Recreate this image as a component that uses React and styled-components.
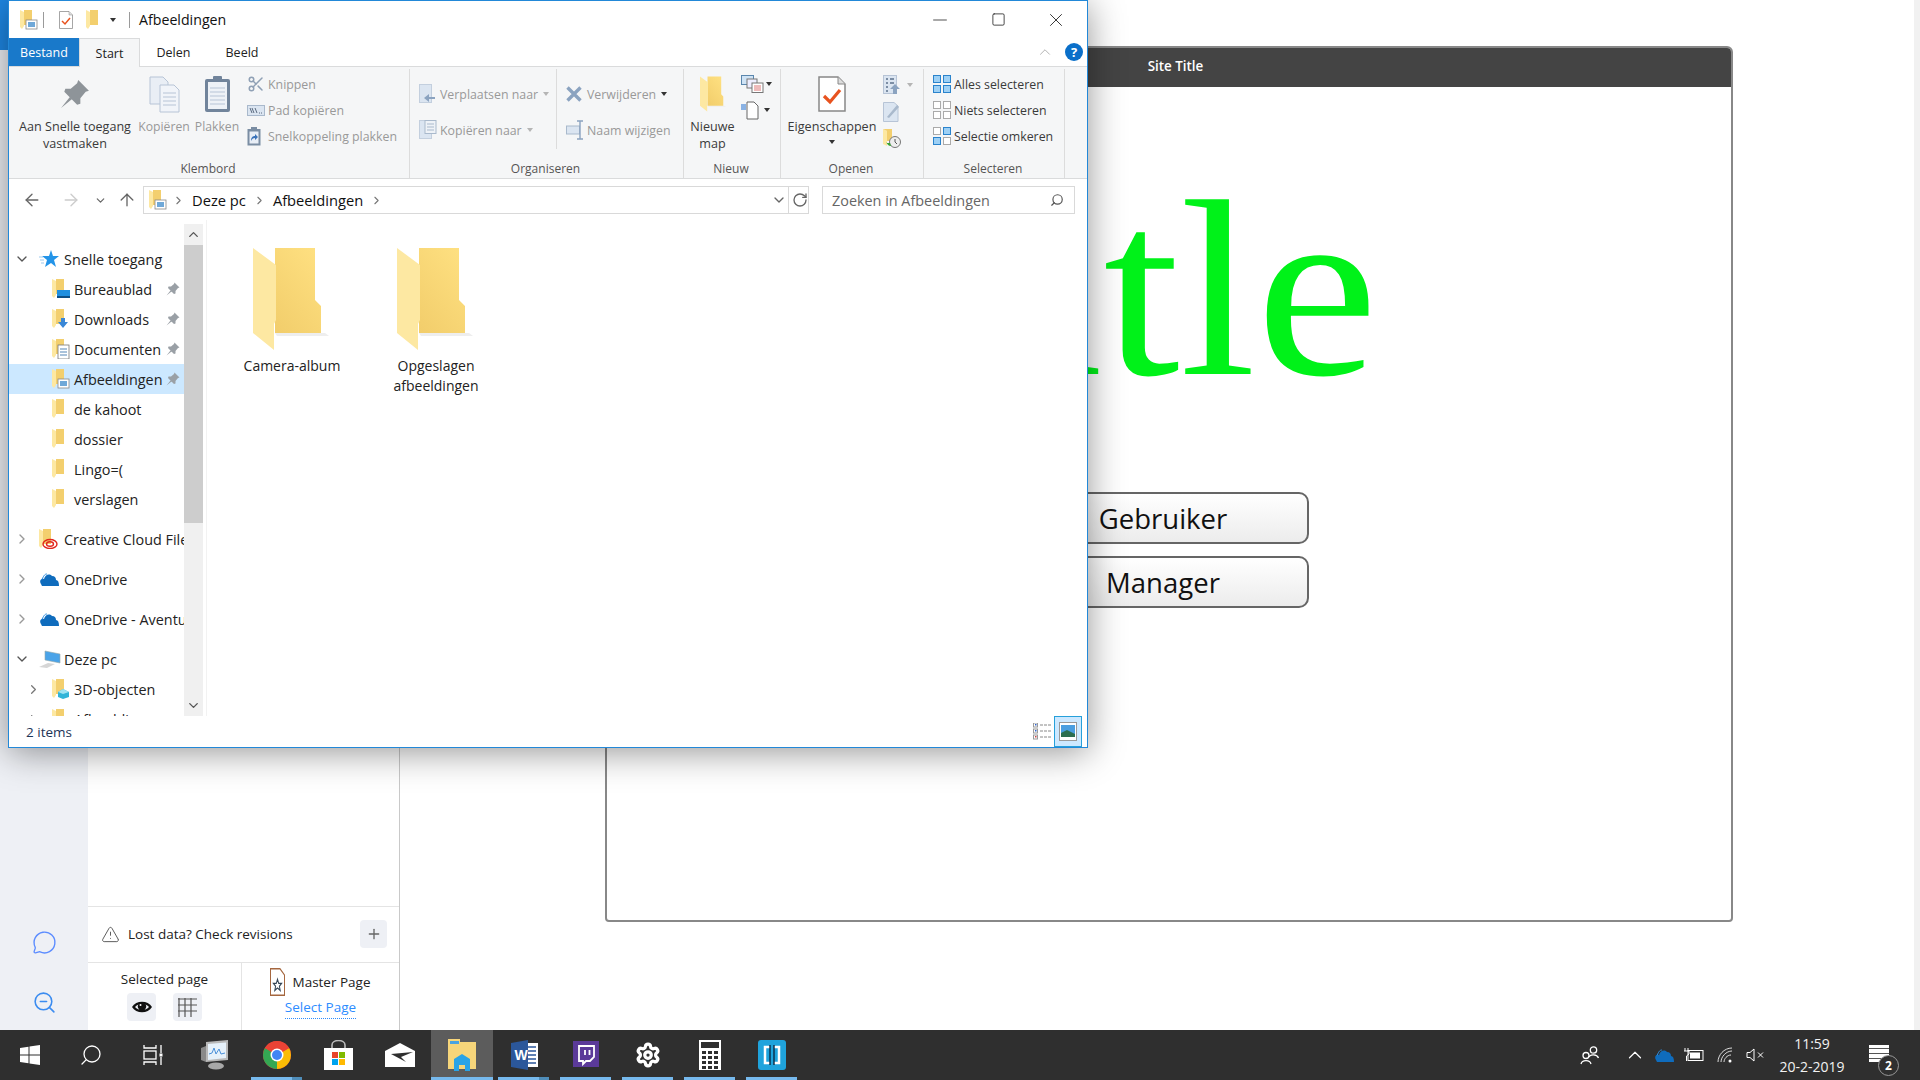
import React from "react"
import styled, { createGlobalStyle } from "styled-components"
import {
  ChevronDown, ChevronRight, ChevronUp, ArrowLeft, ArrowRight, ArrowUp, RotateCw,
  Search, Scissors, Settings, Minus, Square, X, Plus, MessageCircle, ZoomOut, TriangleAlert,
} from "lucide-react"

const GlobalStyle = createGlobalStyle`
  html, body { margin: 0; padding: 0; background: #fff; overflow: hidden; }
  * { box-sizing: border-box; }
  body { font-family: "Open Sans", "Noto Sans", sans-serif; }
`

const Desktop = styled.div`
  position: relative;
  width: 1920px;
  height: 1080px;
  display: flex;
  flex-direction: column;
  overflow: hidden;
`
const Workspace = styled.div`
  flex: 1;
  display: flex;
  min-height: 0;
`
const Rail = styled.div`
  width: 88px;
  background: #eef0f5;
  display: flex;
  flex-direction: column;
  align-items: center;
`
const RailLogo = styled.div`
  width: 100%;
  height: 50px;
  flex: none;
  background: #1e88e5;
  margin-bottom: 880px;
`
const RailIcon = styled.div`
  height: 60px;
  flex: none;
  display: flex;
  justify-content: center;
  color: #5b8cff;
  &:last-child { height: 40px; }
`
const SidePanel = styled.div`
  width: 312px;
  border-right: 1px solid #c9c9c9;
  display: flex;
  flex-direction: column;
  justify-content: flex-end;
  background: #fff;
`
const LostRow = styled.div`
  height: 57px;
  border-top: 1px solid #e4e4e4;
  border-bottom: 1px solid #e4e4e4;
  display: flex;
  align-items: center;
  padding: 0 12px 1px 13px;
  font-size: 13.5px;
  color: #222;
  span { margin-left: 8px; flex: 1; }
`
const AddButton = styled.div`
  width: 27px;
  height: 28px;
  border-radius: 4px;
  background: #eef0f5;
  display: flex;
  align-items: center;
  justify-content: center;
  color: #666;
`
const PageRow = styled.div`
  height: 67px;
  display: flex;
`
const PageCell = styled.div`
  width: ${({ $w }) => $w}px;
  display: flex;
  flex-direction: column;
  align-items: center;
  font-size: 13.5px;
  color: #222;
  border-right: ${({ $divide }) => ($divide ? "1px solid #e4e4e4" : "none")};
  padding-top: ${({ $top }) => $top}px;
`
const CellTools = styled.div`
  display: flex;
  gap: 17px;
  margin-top: 5px;
`
const CellTool = styled.div`
  width: 29px;
  height: 28px;
  border-radius: 4px;
  background: #eef0f5;
  display: flex;
  align-items: center;
  justify-content: center;
  color: #333;
`
const MasterLabel = styled.div`
  display: flex;
  align-items: center;
  gap: 7px;
  height: 29px;
`
const SelectLink = styled.a`
  color: #2d8cff;
  margin-top: 1px;
  padding-bottom: 1px;
  border-bottom: 1px dotted #2d8cff;
  line-height: 20px;
`
const Canvas = styled.div`
  flex: 1;
  display: flex;
  padding: 46px 0 0 205px;
  background: #fff;
  border-right: 6px solid #f1f1f1;
`
const PageFrame = styled.div`
  width: 1128px;
  height: 876px;
  border: 2px solid #888;
  border-radius: 6px 6px 4px 4px;
  overflow: hidden;
  display: flex;
  flex-direction: column;
`
const SiteHeader = styled.div`
  height: 39px;
  background: #444;
  color: #fff;
  font-size: 13.4px;
  font-weight: 600;
  display: flex;
  align-items: center;
  justify-content: center;
  padding: 0 0 4px 13px;
  flex: none;
`
const BigTitle = styled.h1`
  margin: 77px 353px 0 auto;
  width: fit-content;
  font-family: "Liberation Serif", serif;
  font-weight: 400;
  font-size: 252px;
  line-height: 250px;
  color: #00f219;
  transform: scaleX(1.09);
  transform-origin: right center;
`
const ActionList = styled.div`
  margin-top: 78px;
  display: flex;
  flex-direction: column;
  align-items: center;
  gap: 12px;
  padding-right: 12px;
`
const ActionButton = styled.button`
  width: 291px;
  height: 52px;
  border: 2px solid #666;
  border-radius: 10px;
  background: linear-gradient(#fff, #ececec);
  font-family: "Open Sans", sans-serif;
  font-size: 27.5px;
  color: #111;
`

/* explorer window */
const ExplorerWindow = styled.div`
  position: absolute;
  left: 8px;
  top: 0;
  width: 1080px;
  height: 748px;
  border: 1px solid #2288d8;
  background: #fff;
  box-shadow: 0 4px 34px rgba(0, 0, 0, 0.42);
  display: flex;
  flex-direction: column;
  font-size: 12.5px;
  color: #222;
  z-index: 2;
`
const TitleBar = styled.div`
  height: 37px;
  flex: none;
  display: flex;
  align-items: center;
  padding: 0 2px 0 11px;
`
const QuickSep = styled.div`
  width: 1px;
  height: 16px;
  background: #9a9a9a;
  margin: ${({ $m }) => $m};
`
const WindowTitle = styled.div`
  font-size: 14.2px;
  color: #111;
  flex: 1;
`
const WindowControl = styled.div`
  width: 58px;
  display: flex;
  justify-content: center;
  color: #111;
`
const Caret = styled.i`
  display: inline-block;
  width: 0;
  height: 0;
  border-left: 3.5px solid transparent;
  border-right: 3.5px solid transparent;
  border-top: 4px solid ${({ $light }) => ($light ? "#b5b5b5" : "#333")};
  margin-left: ${({ $ml }) => $ml || 0}px;
  margin-top: ${({ $mt }) => $mt || 0}px;
`
const TabRow = styled.div`
  height: 28px;
  flex: none;
  display: flex;
  align-items: stretch;
  position: relative;
  z-index: 1;
  font-size: 12.5px;
`
const FileTab = styled.div`
  width: 70px;
  background: #1979ca;
  color: #fff;
  display: flex;
  align-items: center;
  justify-content: center;
`
const Tab = styled.div`
  width: ${({ $w }) => $w}px;
  display: flex;
  align-items: center;
  justify-content: center;
  margin-bottom: ${({ $active }) => ($active ? "-1px" : "0")};
  background: ${({ $active }) => ($active ? "#f5f6f7" : "transparent")};
  border: 1px solid ${({ $active }) => ($active ? "#dadbdc" : "transparent")};
  border-bottom: none;
`
const RibbonTools = styled.div`
  margin-left: auto;
  display: flex;
  align-items: center;
  gap: 11px;
  padding-right: 4px;
`
const HelpDot = styled.div`
  width: 18px;
  height: 18px;
  border-radius: 50%;
  background: #0a6fc9;
  color: #fff;
  font-size: 13px;
  font-weight: 700;
  display: flex;
  align-items: center;
  justify-content: center;
`
const Ribbon = styled.div`
  height: 113px;
  flex: none;
  background: #f5f6f7;
  border-top: 1px solid #dadbdc;
  border-bottom: 1px solid #dadbdc;
  display: flex;
  padding-top: 2px;
`
const Group = styled.div`
  width: ${({ $w }) => $w}px;
  height: 109px;
  border-right: 1px solid #dcdcdc;
  display: flex;
  flex-direction: column;
`
const GroupBody = styled.div`
  flex: 1;
  display: flex;
  min-height: 0;
`
const GroupLabel = styled.div`
  height: 19px;
  line-height: 19px;
  text-align: center;
  font-size: 12px;
  color: #555;
  flex: none;
  padding-right: 2px;
`
const BigButton = styled.div`
  width: ${({ $w }) => $w}px;
  display: flex;
  flex-direction: column;
  align-items: center;
  padding-top: 5px;
  text-align: center;
  line-height: 17px;
  font-size: ${({ $off }) => ($off ? "12.2px" : "12.6px")};
  white-space: nowrap;
  color: ${({ $off }) => ($off ? "#999" : "#3a3a3a")};
`
const BigIcon = styled.div`
  height: 40px;
  margin-bottom: 4px;
  display: flex;
  align-items: center;
  justify-content: center;
`
const SmallColumn = styled.div`
  display: flex;
  flex-direction: column;
  width: ${({ $w }) => ($w ? `${$w}px` : "auto")};
  padding: ${({ $top }) => $top}px 0 0 ${({ $left }) => $left || 0}px;
  border-right: ${({ $divide }) => ($divide ? "1px solid #dcdcdc" : "none")};
  height: ${({ $divide }) => ($divide ? "80px" : "auto")};
`
const SmallRow = styled.div`
  height: ${({ $h }) => $h}px;
  display: flex;
  align-items: center;
  white-space: nowrap;
  font-size: 12.35px;
  color: ${({ $off }) => ($off ? "#999" : "#3a3a3a")};
`
const SmallSlot = styled.div`
  width: ${({ $w }) => $w}px;
  flex: none;
  display: flex;
  align-items: center;
`
const AddressRow = styled.div`
  height: 41px;
  flex: none;
  display: flex;
  align-items: center;
  padding-top: 1px;
`
const NavButton = styled.div`
  width: ${({ $w }) => $w}px;
  display: flex;
  justify-content: center;
  color: ${({ $off }) => ($off ? "#ccc" : "#666")};
`
const AddressBox = styled.div`
  margin-left: 4px;
  width: 666px;
  height: 28px;
  border: 1px solid #d9d9d9;
  display: flex;
  align-items: center;
  font-size: 14.7px;
  color: #111;
  padding-left: 5px;
`
const AddressIcon = styled.div`
  display: flex;
  margin-right: 3px;
`
const Crumb = styled.span`
  margin: 0 7px;
`
const AddressTail = styled.div`
  margin-left: auto;
  display: flex;
  align-items: stretch;
  height: 100%;
`
const TailCell = styled.div`
  width: 20px;
  display: flex;
  align-items: center;
  justify-content: center;
  color: #666;
  padding-left: 2px;
  border-left: ${({ $line }) => ($line ? "1px solid #d9d9d9" : "none")};
`
const SearchBox = styled.div`
  margin-left: 13px;
  width: 253px;
  height: 28px;
  border: 1px solid #d9d9d9;
  display: flex;
  align-items: center;
  justify-content: space-between;
  padding: 0 10px 0 9px;
  font-size: 14.4px;
  color: #666;
`
const MirroredIcon = styled.span`
  display: flex;
  transform: scaleX(-1);
`
const BodyRow = styled.div`
  height: 496px;
  flex: none;
  display: flex;
  overflow: hidden;
`
const NavPane = styled.div`
  width: 175px;
  flex: none;
  padding-top: 24px;
  overflow: hidden;
  font-size: 14.4px;
`
const NavRow = styled.div`
  height: 30px;
  margin-top: ${({ $gap }) => ($gap ? "10px" : "0")};
  display: flex;
  align-items: center;
  white-space: nowrap;
  overflow: hidden;
  color: #222;
  background: ${({ $sel }) => ($sel ? "#cce8ff" : "transparent")};
`
const NavChevron = styled.div`
  width: ${({ $w }) => $w}px;
  flex: none;
  display: flex;
  justify-content: flex-end;
  color: #777;
  padding-right: ${({ $pr }) => $pr}px;
`
const NavGlyph = styled.div`
  width: ${({ $w }) => $w}px;
  flex: none;
  display: flex;
  align-items: center;
  padding-left: ${({ $left }) => $left || 0}px;
`
const NavText = styled.span`
  flex: ${({ $grow }) => ($grow ? 1 : "none")};
`
const PinSlot = styled.div`
  width: 18px;
  flex: none;
  display: flex;
  justify-content: flex-start;
`
const ScrollBar = styled.div`
  width: 19px;
  flex: none;
  margin-top: 4px;
  background: #f0f0f0;
  display: flex;
  flex-direction: column;
  align-items: center;
  color: #555;
`
const ScrollEnd = styled.div`
  height: ${({ $h }) => $h}px;
  display: flex;
  align-items: center;
  justify-content: center;
  flex: none;
`
const ScrollThumb = styled.div`
  width: 100%;
  height: 278px;
  background: #cdcdcd;
  flex: none;
  margin-bottom: auto;
`
const FileArea = styled.div`
  flex: 1;
  margin-left: 3px;
  border-left: 1px solid #f2f2f2;
  padding: 28px 0 0 13px;
  display: flex;
  align-items: flex-start;
`
const FileTile = styled.div`
  width: 144px;
  display: flex;
  flex-direction: column;
  align-items: center;
  text-align: center;
  font-size: 14px;
  line-height: 20px;
  color: #222;
  svg { margin: 0 2px 6px 0; }
`
const StatusBar = styled.div`
  height: 31px;
  flex: none;
  display: flex;
  align-items: center;
  padding-left: 17px;
  font-size: 13.5px;
  color: #1d3557;
`
const StatusViews = styled.div`
  margin-left: auto;
  display: flex;
  align-items: center;
  height: 100%;
  padding-right: 5px;
`
const ViewToggle = styled.div`
  width: ${({ $w }) => $w}px;
  height: 100%;
  display: flex;
  align-items: center;
  justify-content: center;
  background: ${({ $on }) => ($on ? "#cce8ff" : "transparent")};
  border: 1px solid ${({ $on }) => ($on ? "#26a0da" : "transparent")};
`

/* taskbar */
const Taskbar = styled.div`
  height: 50px;
  flex: none;
  background: #2f2f2f;
  display: flex;
  position: relative;
  z-index: 3;
`
const TaskSlot = styled.div`
  position: relative;
  width: 61.9px;
  height: 100%;
  flex: none;
  display: flex;
  align-items: center;
  justify-content: center;
  background: ${({ $active }) => ($active ? "#5c5c5c" : "transparent")};
  &:first-child { width: 60px; }
  &::after {
    content: "";
    display: ${({ $open }) => ($open ? "block" : "none")};
    position: absolute;
    left: ${({ $active }) => ($active ? "0" : "5px")};
    right: ${({ $active }) => ($active ? "0" : "6px")};
    bottom: 0;
    height: 3px;
    background: ${({ $stack }) =>
      $stack ? "linear-gradient(90deg, #76b9ed 80%, #4f8db9 80%)" : "#76b9ed"};
  }
`
const Tray = styled.div`
  margin-left: auto;
  display: flex;
  align-items: center;
  color: #fff;
`
const TrayIcon = styled.div`
  width: ${({ $w }) => $w}px;
  display: flex;
  justify-content: center;
`
const Clock = styled.div`
  width: 84px;
  margin: 0 14px 0 0;
  text-align: center;
  font-size: 14px;
  line-height: 23px;
  color: #f2f2f2;
`
const Notification = styled.div`
  position: relative;
  width: 52px;
  height: 50px;
`
const NotifyBubble = styled.div`
  position: absolute;
  left: 1px;
  top: 15px;
  width: 20px;
  height: 17px;
  background: repeating-linear-gradient(#fff 0 3px, #555 3px 4px, #fff 4px 5px);
`
const NotifyBadge = styled.div`
  position: absolute;
  left: 10px;
  top: 25px;
  width: 21px;
  height: 21px;
  border-radius: 50%;
  border: 1px solid #999;
  background: #2f2f2f;
  color: #fff;
  font-size: 12px;
  font-weight: 700;
  display: flex;
  align-items: center;
  justify-content: center;
`

/* drawings */
const BigFolder = ({ w = 76, h = 102 }) => (
  <svg width={w} height={h} viewBox="0 0 76 102">
    <defs>
      <linearGradient id="fold" x1="0" x2="1" y1="1" y2="0">
        <stop offset="0" stopColor="#efc966" />
        <stop offset="1" stopColor="#ffe182" />
      </linearGradient>
    </defs>
    <path d="M22 85H72L76 88H24Z" fill="#eee" />
    <path d="M0 0H62V52L68 58V85H22V0Z" fill="url(#fold)" />
    <path d="M0 0L23 17V72L21 76V102L0 85Z" fill="#fde8a2" />
  </svg>
)

const MiniFolder = () => (
  <g>
    <path d="M0 0H12V15H4V0Z" fill="#f3cf6e" />
    <path d="M0 0L4 2V16L2 19L0 17Z" fill="#fde8a2" />
  </g>
)

const overlays = {
  desktop: <g><rect x="5" y="11" width="13" height="8" fill="#1f8fe0" /><rect x="5" y="17" width="13" height="2" fill="#0d4f86" /></g>,
  download: <path d="M9 9H13V13H16L11 19L6 13H9Z" fill="#3a87d6" />,
  doc: <g><rect x="6" y="6" width="11" height="14" fill="#fff" stroke="#777" strokeWidth="0.8" /><path d="M8 10H15M8 13H15M8 16H15" stroke="#5585b5" /></g>,
  picture: <g><rect x="6" y="10" width="11" height="9" fill="#fff" stroke="#888" strokeWidth="0.8" /><rect x="8" y="12" width="7" height="5" fill="#6fa8d8" /></g>,
  cc: <g fill="none" stroke="#e1261c" strokeWidth="1.4"><ellipse cx="11" cy="15" rx="7" ry="4.5" /><ellipse cx="11" cy="15" rx="3.5" ry="2.2" /></g>,
  cube: <g><path d="M11 10L17 13V18L11 20L6 18V13Z" fill="#31b4d8" /><path d="M6 13L11 15L17 13L11 10Z" fill="#9fe3f2" /></g>,
}

const NavFolder = ({ kind }) => (
  <svg width="20" height="20" viewBox="0 0 20 20">
    <MiniFolder />
    {overlays[kind]}
  </svg>
)

const Cloud = ({ w = 20, h = 14, color = "#0f6cbd" }) => (
  <svg width={w} height={h} viewBox="0 0 20 14">
    <path d="M2 12C0 9 2 6 5 7C6 3 10 1 13 4C16 4 17 6 17 8C19 8 20 10 20 14H3Z" fill={color} />
    <path d="M3 7.5C5 3 6 2 8 2" stroke="#2f8fe0" fill="none" />
  </svg>
)

const PinSmall = ({ size = 14, color = "#9aa0a6" }) => (
  <svg width={size} height={size} viewBox="0 0 28 28">
    <path d="M17 1L27 11L24 12L19 18L19 23L16 24L4 12L5 9L10 9L16 4Z M9 17L1 27L11 19Z" fill={color} />
  </svg>
)

const CheckDoc = ({ w = 14, h = 18, sw = 3 }) => (
  <svg width={w} height={h} viewBox="0 0 28 36">
    <path d="M1 1H20L27 8V35H1Z" fill="#fff" stroke="#888" strokeWidth="1.5" />
    <path d="M20 1V8H27" fill="#ddd" stroke="#888" strokeWidth="1" />
    <path d="M6 20L12 26L22 14" fill="none" stroke="#e8531f" strokeWidth={sw} />
  </svg>
)

const CopyDocs = () => (
  <svg width="31" height="37" viewBox="0 0 31 37">
    <path d="M1 1H14L19 6V28H1Z" fill="#e9eef5" stroke="#b7c4d6" />
    <path d="M11 9H25L30 14V36H11Z" fill="#f1f4f9" stroke="#b7c4d6" />
    <path d="M14 17H27M14 21H27M14 25H27M14 29H27" stroke="#b7c4d6" />
  </svg>
)
const PasteBoard = () => (
  <svg width="27" height="38" viewBox="0 0 27 38">
    <rect x="1" y="4" width="25" height="33" rx="2" fill="#71849b" />
    <rect x="4" y="7" width="19" height="27" fill="#eef2f7" />
    <path d="M6 13H21M6 17H21M6 21H21M6 25H21M6 29H21" stroke="#b7c4d6" />
    <rect x="9" y="1" width="9" height="6" rx="1" fill="#71849b" />
  </svg>
)
const PathIcon = () => (
  <svg width="18" height="11" viewBox="0 0 18 11">
    <rect x="0.5" y="0.5" width="17" height="10" fill="#dbe5f1" stroke="#a9b9cc" />
    <path d="M3 3L5 8M5 3L7 8M8 3L10 8" stroke="#5b6b80" />
    <path d="M12 8H15" stroke="#5b6b80" strokeDasharray="1 1" />
  </svg>
)
const ShortcutIcon = () => (
  <svg width="14" height="19" viewBox="0 0 14 19">
    <rect x="0.5" y="2" width="13" height="16.5" fill="#7a8da3" />
    <rect x="2.5" y="4.5" width="9" height="12" fill="#e8eef6" />
    <rect x="4" y="0" width="6" height="3" fill="#7a8da3" />
    <path d="M4 14C4 10 6 9 8 9V7L11 10L8 13V11C6 11 5 12 4 14Z" fill="#3b73b9" />
  </svg>
)
const MoveIcon = ({ kind }) => (
  <svg width="18" height="20" viewBox="0 0 18 20">
    <rect x="0.5" y="0.5" width="12" height="18" fill="#dbe5f1" stroke="#c3cfde" />
    {kind === "move"
      ? <path d="M16 13H10V10L5 14L10 18V15H16Z" fill="#8ba3c0" />
      : <g><rect x="6" y="0.5" width="11" height="13" fill="#eef2f7" stroke="#a9b9cc" /><path d="M8 4H15M8 7H15M8 10H15" stroke="#a9b9cc" /></g>}
  </svg>
)
const DeleteIcon = () => (
  <svg width="16" height="16" viewBox="0 0 16 16">
    <path d="M1.5 1.5L14.5 14.5M14.5 1.5L1.5 14.5" stroke="#8ba3c0" strokeWidth="3.4" />
  </svg>
)
const RenameIcon = () => (
  <svg width="18" height="20" viewBox="0 0 18 20">
    <rect x="0.5" y="6" width="13" height="8" fill="#dbe5f1" stroke="#a9b9cc" />
    <path d="M14 1V19M11 1H17M11 19H17" stroke="#8ba3c0" strokeWidth="1.4" fill="none" />
  </svg>
)
const NewItemIcon = () => (
  <svg width="24" height="18" viewBox="0 0 24 18">
    <rect x="0.5" y="0.5" width="12" height="9" fill="#cfe3f5" stroke="#5a86ad" />
    <rect x="6" y="4" width="10" height="9" fill="#eef" stroke="#777" />
    <rect x="11" y="8" width="11" height="9.5" fill="#fff" stroke="#777" />
    <path d="M13 11H20M13 13H20M13 15H20" stroke="#d77" />
  </svg>
)
const EasyIcon = () => (
  <svg width="18" height="19" viewBox="0 0 18 19">
    <path d="M6 1H13L17 5V18H6Z" fill="#fff" stroke="#666" />
    <path d="M0 4H5M0 6H5M0 8H5" stroke="#1f6fd1" />
  </svg>
)
const OpenIcon = () => (
  <svg width="18" height="20" viewBox="0 0 18 20">
    <rect x="0.5" y="0.5" width="13" height="18" fill="#dbe5f1" stroke="#b7c4d6" />
    <path d="M3 4H5M7 4H11M3 8H5M7 8H11M3 12H5M3 16H5" stroke="#7c8ea5" strokeWidth="2" />
    <path d="M12 9L17 14H14V19H10V14H7Z" fill="#8ba3c0" />
  </svg>
)
const EditIcon = () => (
  <svg width="17" height="20" viewBox="0 0 17 20">
    <path d="M0.5 0.5H11L15 4V19.5H0.5Z" fill="#dbe5f1" stroke="#b7c4d6" />
    <path d="M4 15L14 3L16 5L6 16Z" fill="#a9b9cc" />
  </svg>
)
const HistoryIcon = () => (
  <svg width="18" height="19" viewBox="0 0 18 19">
    <path d="M0 0L4 2V17L0 15Z" fill="#fde8a2" />
    <path d="M0 0H9V12H4V2Z" fill="#f3cf6e" />
    <circle cx="12" cy="13" r="5.5" fill="#eee" stroke="#777" />
    <path d="M12 10V13L14 15" stroke="#555" fill="none" />
    <path d="M3 13C5 17 7 17 8 17L7 14H4Z" fill="#3aa535" />
  </svg>
)
const SelectGrid = ({ on }) => (
  <svg width="18" height="18" viewBox="0 0 18 18">
    {[[0, 0], [10, 0], [0, 10], [10, 10]].map(([x, y], i) => (
      <rect key={i} x={x + 0.5} y={y + 0.5} width="7" height="7"
        fill={on[i] ? "#9dd0f5" : "#fff"} stroke={on[i] ? "#2a83cc" : "#aaa"} />
    ))}
  </svg>
)
const EyeIcon = () => (
  <svg width="20" height="14" viewBox="0 0 20 14">
    <path d="M0 7C4 0 16 0 20 7C16 14 4 14 0 7Z" fill="#111" />
    <path d="M3 7C6 3 14 3 17 7C14 11 6 11 3 7Z" fill="#eef0f5" />
    <circle cx="10" cy="6.5" r="4.2" fill="#111" />
    <circle cx="8.5" cy="5" r="1" fill="#fff" />
  </svg>
)
const GridIcon = () => (
  <svg width="19" height="19" viewBox="0 0 19 19" fill="none" stroke="#555" strokeWidth="1.2">
    <path d="M1 0V19M7 0V19M13 0V19M0 1H19M0 7H19M0 13H19" />
  </svg>
)

const WinLogo = () => (
  <svg width="20" height="20" viewBox="0 0 20 20" fill="#fff">
    <path d="M0 3L8.5 1.8V9.5H0ZM9.5 1.6L20 0V9.5H9.5ZM0 10.5H8.5V18.2L0 17ZM9.5 10.5H20V20L9.5 18.4Z" />
  </svg>
)
const Perfmon = () => (
  <svg width="27" height="30" viewBox="0 0 27 30">
    <path d="M5 2L27 0V20L5 22Z" fill="#b9b9b9" />
    <path d="M7 4L25 2.5V18L7 20Z" fill="#e6f1fa" />
    <path d="M8 14L11 13L13 8L15 14L18 9L20 14L24 13" stroke="#4a90d9" fill="none" />
    <path d="M0 8L5 6V22L0 20Z" fill="#8a8a8a" />
    <ellipse cx="15" cy="26" rx="8" ry="3.5" fill="#a8a8a8" />
  </svg>
)
const Chrome = () => (
  <svg width="28" height="28" viewBox="0 0 28 28">
    <circle cx="14" cy="14" r="14" fill="#ea4335" />
    <path d="M14 14L1.9 7A14 14 0 0 0 14 28Z" fill="#34a853" />
    <path d="M14 14L14 28A14 14 0 0 0 26.1 7Z" fill="#fbbc05" />
    <path d="M14 14L26.1 7A14 14 0 0 0 1.9 7Z" fill="#ea4335" />
    <circle cx="14" cy="14" r="6.5" fill="#fff" />
    <circle cx="14" cy="14" r="5" fill="#4285f4" />
  </svg>
)
const Store = () => (
  <svg width="29" height="30" viewBox="0 0 29 30">
    <path d="M8 9V5C8 -1 21 -1 21 5V9" stroke="#bbb" strokeWidth="1.6" fill="none" />
    <rect x="0" y="8" width="29" height="22" fill="#fff" />
    <rect x="8" y="12" width="6" height="6" fill="#e8452c" />
    <rect x="15" y="12" width="6" height="6" fill="#7fba00" />
    <rect x="8" y="19" width="6" height="6" fill="#00a4ef" />
    <rect x="15" y="19" width="6" height="6" fill="#ffb900" />
  </svg>
)
const Mail = () => (
  <svg width="30" height="24" viewBox="0 0 30 24">
    <path d="M0 8L15 0L30 8V24H0Z" fill="#fff" />
    <path d="M6 11L28 9L16 14L21 19Z" fill="#2f2f2f" />
  </svg>
)
const ExplorerIcon = () => (
  <svg width="28" height="32" viewBox="0 0 28 32">
    <path d="M0 0H12V3H28V30H0Z" fill="#f6d57a" />
    <rect x="2" y="2" width="9" height="3" fill="#4aa3e0" />
    <path d="M6 32V20L14 15L22 20V32H17V26H11V32Z" fill="#29a3e6" />
  </svg>
)
const WordIcon = () => (
  <svg width="27" height="30" viewBox="0 0 27 30">
    <rect x="12" y="3" width="15" height="24" fill="#fff" />
    <path d="M14 7H25M14 11H25M14 15H25M14 19H25M14 23H25" stroke="#2b579a" strokeWidth="1.6" />
    <path d="M0 3L17 0V30L0 27Z" fill="#2b579a" />
    <text x="3.5" y="20" fill="#fff" fontSize="14" fontWeight="700" fontFamily="Liberation Sans, sans-serif">W</text>
  </svg>
)
const Twitch = () => (
  <svg width="26" height="28" viewBox="0 0 26 28">
    <rect width="26" height="26" fill="#5b3a99" />
    <path d="M6 5H21V16L17 20H13L10 23V20H6Z" fill="none" stroke="#fff" strokeWidth="1.8" />
    <path d="M12 9V14M16.5 9V14" stroke="#fff" strokeWidth="1.8" />
  </svg>
)
const Calc = () => (
  <svg width="22" height="30" viewBox="0 0 22 30">
    <rect width="22" height="30" fill="#fff" />
    <rect x="2" y="2" width="18" height="6" fill="#2f2f2f" />
    {[11, 16, 21, 26].map((y) =>
      [3, 9, 15].map((x) => <rect key={`${x}-${y}`} x={x} y={y} width="4" height="3" fill="#2f2f2f" />)
    )}
  </svg>
)
const BlueApp = () => (
  <svg width="28" height="30" viewBox="0 0 28 30">
    <rect width="28" height="30" rx="3" fill="#1fa3dc" />
    <path d="M12 7H7V23H12M16 7H21V23H16" fill="none" stroke="#fff" strokeWidth="2.5" />
    <path d="M12 5V25M16 5V25" stroke="#0b2a44" strokeWidth="1.4" />
  </svg>
)
const TaskView = () => (
  <svg width="20" height="20" viewBox="0 0 20 20" fill="none" stroke="#fff" strokeWidth="1.3">
    <path d="M1 0V3H13V0M1 20V17H13V20" /><rect x="1" y="6" width="12" height="8" />
    <path d="M18 0V8M18 12V20" /><rect x="16.5" y="8.5" width="3" height="3" fill="#fff" stroke="none" />
  </svg>
)
const People = () => (
  <svg width="20" height="20" viewBox="0 0 20 20" fill="none" stroke="#fff" strokeWidth="1.3">
    <circle cx="13.5" cy="5" r="3.2" /><path d="M9 12C10 9 17 9 18.5 13" />
    <circle cx="6" cy="10.5" r="3" /><path d="M1 19C2 14.5 10 14.5 11 19" />
  </svg>
)
const Battery = () => (
  <svg width="21" height="14" viewBox="0 0 21 14">
    <rect x="5" y="2.5" width="15" height="10" fill="#2f2f2f" stroke="#fff" />
    <rect x="7" y="4.5" width="10" height="6" fill="#fff" />
    <path d="M2 0V3M5 0V3M1 3H6V6L3.5 8V13" stroke="#fff" fill="none" />
  </svg>
)
const Wifi = () => (
  <svg width="16" height="16" viewBox="0 0 16 16" fill="none" stroke="#ddd">
    <path d="M1 15C1 8 7 1 15 1M4 15C4 10 9 4 15 4M7 15C7 12 10 8 14 8" />
    <circle cx="13" cy="14" r="1.5" fill="#fff" stroke="none" />
  </svg>
)
const Volume = () => (
  <svg width="19" height="14" viewBox="0 0 19 14" fill="none" stroke="#fff">
    <path d="M1 4.5H4L8 1V13L4 9.5H1Z" />
    <path d="M12 4.5L17 9.5M17 4.5L12 9.5" />
  </svg>
)
const MasterIcon = () => (
  <svg width="15" height="28" viewBox="0 0 15 20" preserveAspectRatio="none">
    <path d="M0.5 0.5H10L14.5 5V19.5H0.5Z" fill="#fff" stroke="#a5673f" />
    <path d="M7.5 8L8.7 11H11.5L9.4 13L10.2 16L7.5 14.3L4.8 16L5.6 13L3.5 11H6.3Z" fill="none" stroke="#345" />
  </svg>
)
const ListView = () => (
  <svg width="19" height="17" viewBox="0 0 19 17">
    {[1, 7, 13].map((y, i) => (
      <g key={y}>
        <rect x="0.5" y={y - 1} width="4" height="4" fill="#fff" stroke="#999" />
        <rect x="2" y={y} width="1.5" height="1.5" fill={i === 2 ? "#c44" : "#36c"} />
        <path d={`M7 ${y + 1}H18`} stroke="#888" strokeDasharray="3 1" />
      </g>
    ))}
  </svg>
)
const ThumbView = () => (
  <svg width="18" height="19" viewBox="0 0 18 19">
    <rect x="0.5" y="0.5" width="17" height="18" fill="#fff" stroke="#999" />
    <rect x="2" y="3" width="14" height="12" fill="#4a9ee0" />
    <path d="M2 11L8 8L16 12V15H2Z" fill="#2c6e4f" />
  </svg>
)
const NavPc = () => (
  <svg width="22" height="18" viewBox="0 0 22 18">
    <path d="M6 1L21 4V13L6 10Z" fill="#4aa3e8" stroke="#9aa" strokeWidth="0.6" />
    <path d="M0 17L9 13L16 14L8 18Z" fill="#d6d6d6" />
  </svg>
)
const NavStar = () => (
  <svg width="20" height="18" viewBox="0 0 20 18">
    <path d="M12 0L14 6H20L15 10L17 17L12 13L6 17L8 10L3 6H10Z" fill="#2394e8" />
    <path d="M0 7H4M1 10H5M2 13H5" stroke="#9cc9ee" />
  </svg>
)

const quickItems = [
  { label: "Bureaublad", kind: "desktop", pin: true },
  { label: "Downloads", kind: "download", pin: true },
  { label: "Documenten", kind: "doc", pin: true },
  { label: "Afbeeldingen", kind: "picture", pin: true, sel: true },
  { label: "de kahoot" },
  { label: "dossier" },
  { label: "Lingo=(" },
  { label: "verslagen" },
]

const SubRow = ({ label, kind, pin, sel, arrow }) => (
  <NavRow $sel={sel}>
    <NavChevron $w={43} $pr={11}>{arrow && <ChevronRight size={15} />}</NavChevron>
    <NavGlyph $w={22}><NavFolder kind={kind} /></NavGlyph>
    <NavText $grow>{label}</NavText>
    {pin && <PinSlot><PinSmall /></PinSlot>}
  </NavRow>
)

const TopRow = ({ open, icon, label, gap }) => (
  <NavRow $gap={gap}>
    <NavChevron $w={21} $pr={0}>
      {open ? <ChevronDown size={16} color="#555" /> : <ChevronRight size={16} color="#999" />}
    </NavChevron>
    <NavGlyph $w={34} $left={9}>{icon}</NavGlyph>
    <NavText>{label}</NavText>
  </NavRow>
)

const App = () => {
  return (
    <Desktop>
      <GlobalStyle />
      <Workspace>
        <Rail>
          <RailLogo />
          <RailIcon><MessageCircle size={25} strokeWidth={1.3} /></RailIcon>
          <RailIcon><ZoomOut size={25} strokeWidth={1.5} color="#3b8cf0" /></RailIcon>
        </Rail>
        <SidePanel>
          <LostRow>
            <TriangleAlert size={19} strokeWidth={1.2} color="#555" />
            <span>Lost data? Check revisions</span>
            <AddButton><Plus size={16} /></AddButton>
          </LostRow>
          <PageRow>
            <PageCell $w={154} $top={7} $divide>
              Selected page
              <CellTools>
                <CellTool><EyeIcon /></CellTool>
                <CellTool><GridIcon /></CellTool>
              </CellTools>
            </PageCell>
            <PageCell $w={157} $top={4}>
              <MasterLabel><MasterIcon />Master Page</MasterLabel>
              <SelectLink>Select Page</SelectLink>
            </PageCell>
          </PageRow>
        </SidePanel>
        <Canvas>
          <PageFrame>
            <SiteHeader>Site Title</SiteHeader>
            <BigTitle>Title</BigTitle>
            <ActionList>
              <ActionButton>Gebruiker</ActionButton>
              <ActionButton>Manager</ActionButton>
            </ActionList>
          </PageFrame>
        </Canvas>
      </Workspace>

      <ExplorerWindow>
        <TitleBar>
          <NavFolder kind="picture" />
          <QuickSep $m="0 15px 0 3px" />
          <CheckDoc />
          <NavGlyph $w={13} />
          <NavFolder />
          <Caret $ml={4} />
          <QuickSep $m="0 9px 0 13px" />
          <WindowTitle>Afbeeldingen</WindowTitle>
          <WindowControl><Minus size={22} strokeWidth={0.8} /></WindowControl>
          <WindowControl><Square size={15} strokeWidth={1.2} /></WindowControl>
          <WindowControl><X size={22} strokeWidth={0.9} /></WindowControl>
        </TitleBar>
        <TabRow>
          <FileTab>Bestand</FileTab>
          <Tab $w={61} $active>Start</Tab>
          <Tab $w={67}>Delen</Tab>
          <Tab $w={70}>Beeld</Tab>
          <RibbonTools>
            <ChevronUp size={18} strokeWidth={1.2} color="#aaa" />
            <HelpDot>?</HelpDot>
          </RibbonTools>
        </TabRow>
        <Ribbon>
          <Group $w={401}>
            <GroupBody>
              <BigButton $w={132}>
                <BigIcon><PinSmall size={30} color="#8e9499" /></BigIcon>
                Aan Snelle toegang<br />vastmaken
              </BigButton>
              <BigButton $w={46} $off><BigIcon><CopyDocs /></BigIcon>Kopiëren</BigButton>
              <BigButton $w={60} $off><BigIcon><PasteBoard /></BigIcon>Plakken</BigButton>
              <SmallColumn $top={2}>
                <SmallRow $h={26} $off><SmallSlot $w={21}><Scissors size={18} color="#8fa0b5" /></SmallSlot>Knippen</SmallRow>
                <SmallRow $h={26} $off><SmallSlot $w={21}><PathIcon /></SmallSlot>Pad kopiëren</SmallRow>
                <SmallRow $h={26} $off><SmallSlot $w={21}><ShortcutIcon /></SmallSlot>Snelkoppeling plakken</SmallRow>
              </SmallColumn>
            </GroupBody>
            <GroupLabel>Klembord</GroupLabel>
          </Group>
          <Group $w={274}>
            <GroupBody>
              <SmallColumn $top={7} $left={9} $w={147} $divide>
                <SmallRow $h={36} $off><SmallSlot $w={21}><MoveIcon kind="move" /></SmallSlot>Verplaatsen naar<Caret $light $ml={5} /></SmallRow>
                <SmallRow $h={36} $off><SmallSlot $w={21}><MoveIcon /></SmallSlot>Kopiëren naar<Caret $light $ml={5} /></SmallRow>
              </SmallColumn>
              <SmallColumn $top={7} $left={9}>
                <SmallRow $h={36} $off><SmallSlot $w={21}><DeleteIcon /></SmallSlot>Verwijderen<Caret $ml={5} /></SmallRow>
                <SmallRow $h={36} $off><SmallSlot $w={21}><RenameIcon /></SmallSlot>Naam wijzigen</SmallRow>
              </SmallColumn>
            </GroupBody>
            <GroupLabel>Organiseren</GroupLabel>
          </Group>
          <Group $w={97}>
            <GroupBody>
              <BigButton $w={57}>
                <BigIcon><BigFolder w={26} h={36} /></BigIcon>
                Nieuwe<br />map
              </BigButton>
              <SmallColumn $top={2}>
                <SmallRow $h={26}><NewItemIcon /><Caret $ml={1} /></SmallRow>
                <SmallRow $h={26}><EasyIcon /><Caret $ml={5} /></SmallRow>
              </SmallColumn>
            </GroupBody>
            <GroupLabel>Nieuw</GroupLabel>
          </Group>
          <Group $w={143}>
            <GroupBody>
              <BigButton $w={102}>
                <BigIcon><CheckDoc w={28} h={36} sw={3.2} /></BigIcon>
                Eigenschappen
                <Caret $mt={5} />
              </BigButton>
              <SmallColumn $top={2}>
                <SmallRow $h={27}><OpenIcon /><Caret $light $ml={6} /></SmallRow>
                <SmallRow $h={27}><EditIcon /></SmallRow>
                <SmallRow $h={27}><HistoryIcon /></SmallRow>
              </SmallColumn>
            </GroupBody>
            <GroupLabel>Openen</GroupLabel>
          </Group>
          <Group $w={141}>
            <GroupBody>
              <SmallColumn $top={2} $left={9}>
                <SmallRow $h={26}><SmallSlot $w={21}><SelectGrid on={[1, 1, 1, 1]} /></SmallSlot>Alles selecteren</SmallRow>
                <SmallRow $h={26}><SmallSlot $w={21}><SelectGrid on={[0, 0, 0, 0]} /></SmallSlot>Niets selecteren</SmallRow>
                <SmallRow $h={26}><SmallSlot $w={21}><SelectGrid on={[0, 1, 1, 0]} /></SmallSlot>Selectie omkeren</SmallRow>
              </SmallColumn>
            </GroupBody>
            <GroupLabel>Selecteren</GroupLabel>
          </Group>
        </Ribbon>
        <AddressRow>
          <NavButton $w={46}><ArrowLeft size={20} strokeWidth={1.6} /></NavButton>
          <NavButton $w={32} $off><ArrowRight size={20} strokeWidth={1.6} /></NavButton>
          <NavButton $w={27}><ChevronDown size={13} strokeWidth={2.2} /></NavButton>
          <NavButton $w={25}><ArrowUp size={20} strokeWidth={1.6} /></NavButton>
          <AddressBox>
            <AddressIcon><NavFolder kind="picture" /></AddressIcon>
            <ChevronRight size={13} color="#777" />
            <Crumb>Deze pc</Crumb>
            <ChevronRight size={13} color="#777" />
            <Crumb>Afbeeldingen</Crumb>
            <ChevronRight size={13} color="#777" />
            <AddressTail>
              <TailCell><ChevronDown size={16} /></TailCell>
              <TailCell $line><RotateCw size={16} /></TailCell>
            </AddressTail>
          </AddressBox>
          <SearchBox>
            Zoeken in Afbeeldingen
            <MirroredIcon><Search size={14} color="#555" strokeWidth={2} /></MirroredIcon>
          </SearchBox>
        </AddressRow>
        <BodyRow>
          <NavPane>
            <TopRow open icon={<NavStar />} label="Snelle toegang" />
            {quickItems.map((item) => <SubRow key={item.label} {...item} />)}
            <TopRow gap icon={<NavFolder kind="cc" />} label="Creative Cloud Files" />
            <TopRow gap icon={<Cloud />} label="OneDrive" />
            <TopRow gap icon={<Cloud />} label="OneDrive - Aventus" />
            <TopRow gap open icon={<NavPc />} label="Deze pc" />
            <SubRow label="3D-objecten" kind="cube" arrow />
            <SubRow label="Afbeeldingen" kind="picture" arrow />
          </NavPane>
          <ScrollBar>
            <ScrollEnd $h={21}><ChevronUp size={15} strokeWidth={2.2} /></ScrollEnd>
            <ScrollThumb />
            <ScrollEnd $h={21}><ChevronDown size={15} strokeWidth={2.2} /></ScrollEnd>
          </ScrollBar>
          <FileArea>
            <FileTile><BigFolder />Camera-album</FileTile>
            <FileTile><BigFolder />Opgeslagen<br />afbeeldingen</FileTile>
          </FileArea>
        </BodyRow>
        <StatusBar>
          2 items
          <StatusViews>
            <ViewToggle $w={24}><ListView /></ViewToggle>
            <ViewToggle $w={28} $on><ThumbView /></ViewToggle>
          </StatusViews>
        </StatusBar>
      </ExplorerWindow>

      <Taskbar>
        <TaskSlot><WinLogo /></TaskSlot>
        <TaskSlot><MirroredIcon><Search size={24} strokeWidth={1.3} color="#fff" /></MirroredIcon></TaskSlot>
        <TaskSlot><TaskView /></TaskSlot>
        <TaskSlot><Perfmon /></TaskSlot>
        <TaskSlot $open $stack><Chrome /></TaskSlot>
        <TaskSlot><Store /></TaskSlot>
        <TaskSlot><Mail /></TaskSlot>
        <TaskSlot $open $active><ExplorerIcon /></TaskSlot>
        <TaskSlot $open $stack><WordIcon /></TaskSlot>
        <TaskSlot $open><Twitch /></TaskSlot>
        <TaskSlot $open><Settings size={26} strokeWidth={3} color="#fff" /></TaskSlot>
        <TaskSlot $open><Calc /></TaskSlot>
        <TaskSlot $open><BlueApp /></TaskSlot>
        <Tray>
          <TrayIcon $w={36}><People /></TrayIcon>
          <TrayIcon $w={12} />
          <TrayIcon $w={29}><ChevronUp size={22} strokeWidth={1.3} /></TrayIcon>
          <TrayIcon $w={29}><Cloud /></TrayIcon>
          <TrayIcon $w={31}><Battery /></TrayIcon>
          <TrayIcon $w={31}><Wifi /></TrayIcon>
          <TrayIcon $w={30}><Volume /></TrayIcon>
          <Clock>11:59<br />20-2-2019</Clock>
          <Notification>
            <NotifyBubble />
            <NotifyBadge>2</NotifyBadge>
          </Notification>
        </Tray>
      </Taskbar>
    </Desktop>
  )
}

export default App
